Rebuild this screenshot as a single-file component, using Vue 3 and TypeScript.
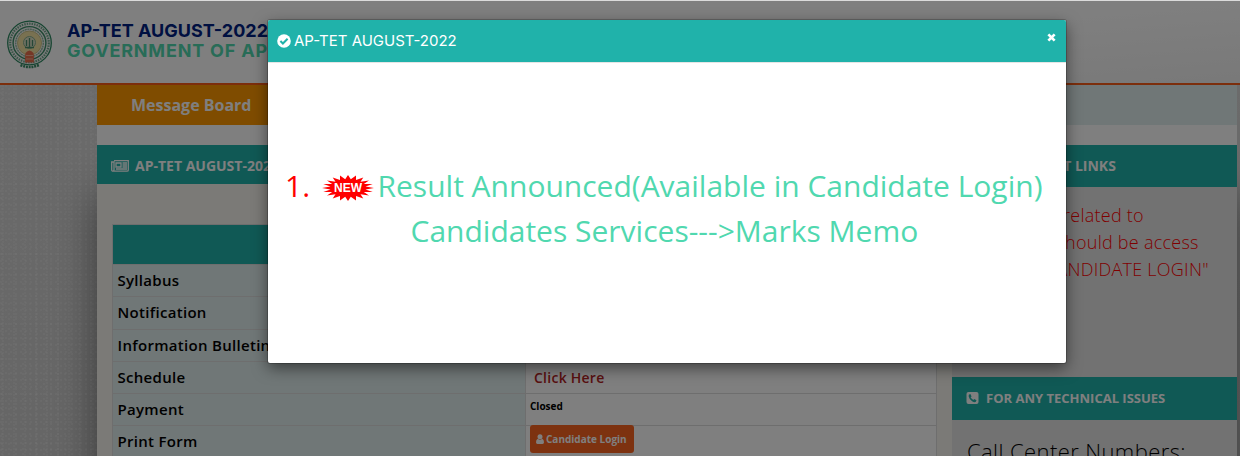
<script setup lang="ts">
interface Row {
  label: string
  kind: 'empty' | 'link' | 'closed' | 'button'
}

const rows: Row[] = [
  { label: 'Syllabus', kind: 'empty' },
  { label: 'Notification', kind: 'empty' },
  { label: 'Information Bulletin', kind: 'empty' },
  { label: 'Schedule', kind: 'link' },
  { label: 'Payment', kind: 'closed' },
  { label: 'Print Form', kind: 'button' },
]

// alternating radii give the spiky outline of the NEW badge
function burstPoints(): string {
  const points: string[] = []
  const spikes = 20
  for (let i = 0; i < spikes * 2; i++) {
    const angle = (Math.PI * i) / spikes
    const k = i % 2 === 0 ? 1 : 0.68
    points.push(`${(26 + 26 * k * Math.cos(angle)).toFixed(1)},${(13 + 13 * k * Math.sin(angle)).toFixed(1)}`)
  }
  return points.join(' ')
}
</script>

<template>
  <div class="screen">
    <div class="page">
      <header class="site-header">
        <svg class="emblem" viewBox="0 0 46 50">
          <circle cx="22.5" cy="23" r="21.8" fill="#f6f6f6" stroke="#2d8a62" stroke-width="1.300" />
          <circle cx="22.5" cy="23" r="19.300" fill="none" stroke="#6fa98d" stroke-width="2.200" stroke-dasharray="1.500 1" />
          <circle cx="22.5" cy="23" r="16.400" fill="none" stroke="#3f8f69" stroke-width="1.400" />
          <circle cx="22.5" cy="23" r="13.800" fill="none" stroke="#86b59a" stroke-width="1.300" stroke-dasharray="2 .6" />
          <circle cx="22.5" cy="23" r="12" fill="#f3e3a2" stroke="#cfc58a" />
          <circle cx="22.5" cy="22.500" r="6" fill="#dde0c4" stroke="#86ad8d" />
          <path d="M19.500 20v6m3-8v9m3-7v6M18 27.500h9" stroke="#4d8f6d" stroke-width="1.300" />
          <path d="M18.500 33q4-5 8 0l.4 3v6.500h-8.800v-6.500z" fill="#ea6f4c" />
          <path d="M19 35.500h7m-7 3.500h7" stroke="#fac0a6" stroke-width=".8" />
          <path d="M13.500 45q9 4 18.500 0" fill="none" stroke="#3c8d68" stroke-width="2.600" stroke-dasharray="2 .8" />
        </svg>
        <div class="site-title">
          <div class="title-main">AP-TET AUGUST-2022</div>
          <div class="title-sub">GOVERNMENT OF AP</div>
        </div>
      </header>

      <div class="container">
        <div class="message-bar">
          <div class="message-label">Message Board</div>
        </div>
        <div class="columns">
          <main class="main-col">
            <div class="panel-head main-head">
              <svg class="news-icon" viewBox="0 0 18 12">
                <path d="M3 .7h14.300v9.200q0 1.300-1.300 1.300H2q-1.300 0-1.300-1.300V2H3v7.700q0 1.300-1 1.300M5 3h5v4H5zM11.500 3H16M11.500 5H16M11.500 7H16M5 9h11" fill="none" stroke="currentColor" stroke-width="1.3" />
              </svg>
              <span>AP-TET AUGUST-2022</span>
            </div>
            <div class="table">
              <div class="table-head"></div>
              <div v-for="row in rows" :key="row.label" class="row">
                <div class="cell-label">{{ row.label }}</div>
                <div class="cell-value">
                  <span v-if="row.kind === 'link'" class="link">Click Here</span>
                  <span v-else-if="row.kind === 'closed'" class="closed">Closed</span>
                  <span v-else-if="row.kind === 'button'" class="login">
                    <svg class="user-icon" viewBox="0 0 8 10">
                      <circle cx="4" cy="2.700" r="2.500" />
                      <path d="M1.800 4.800Q4 6.500 6.200 4.800Q8 5.500 8 8.300Q8 10 6.500 10h-5Q0 10 0 8.300Q0 5.500 1.800 4.800z" />
                    </svg>
                    Candidate Login
                  </span>
                </div>
              </div>
            </div>
          </main>
          <aside class="side-col">
            <div class="panel-head links-head">IMPORTANT LINKS</div>
            <div class="links-body">
              <div>All services related to</div>
              <div>Candidate should be access</div>
              <div>through "CANDIDATE LOGIN"</div>
            </div>
            <div class="panel-head side-head">
              <svg class="phone-icon" viewBox="0 0 12 12">
                <rect width="12" height="12" rx="2" fill="currentColor" />
                <path d="M2.300 2.800L3.900 2l1.200 2.400-1 .8Q5 7 6.800 7.900l.9-1L10 8.200l-.7 1.600Q8 10.700 5.600 9.200 2.700 7.300 2.200 4.500z" fill="#20b2aa" />
              </svg>
              <span>FOR ANY TECHNICAL ISSUES</span>
            </div>
            <div class="call">Call Center Numbers:</div>
          </aside>
        </div>
      </div>
    </div>

    <div class="backdrop">
      <div class="modal">
        <div class="modal-head">
          <svg class="check-icon" viewBox="0 0 14 14">
            <circle cx="7" cy="7" r="6.800" fill="#fff" />
            <path d="M3.400 7l2.500 2.500 4.700-4.700" fill="none" stroke="#20b2aa" stroke-width="2" />
          </svg>
          <span class="modal-title">AP-TET AUGUST-2022</span>
          <svg class="close-icon" viewBox="0 0 8 8">
            <path d="M1.200 1.200l5.600 5.600M6.800 1.200L1.200 6.800" stroke="#fff" stroke-width="2.400" />
          </svg>
        </div>
        <div class="modal-body">
          <div class="line">
            <span class="number">1.</span>
            <svg class="new-badge" viewBox="0 0 52 26">
              <polygon :points="burstPoints()" fill="#f00" />
              <text x="26" y="17.300" text-anchor="middle">NEW</text>
            </svg>
            <span class="result">Result Announced(Available in Candidate Login)</span>
          </div>
          <div class="line second">
            <span class="services">Candidates Services---&gt;Marks Memo</span>
          </div>
        </div>
      </div>
    </div>
  </div>
</template>

<style>
body {
  margin: 0;
  overflow: hidden;
}
</style>

<style scoped>
.screen {
  position: relative;
  width: 1240px;
  height: 456px;
  overflow: hidden;
  font-family: "Open Sans", sans-serif;
}

.page {
  height: 456px;
  box-sizing: border-box;
  border-top: 1px solid #dbdbdb;
  overflow: hidden;
  background-color: #d4d4d4;
  background-image: radial-gradient(circle at 1px 1px, rgba(255, 255, 255, 0.16) 0.7px, transparent 1px),
    radial-gradient(circle at 2px 3px, rgba(255, 255, 255, 0.16) 0.7px, transparent 1px),
    radial-gradient(circle at 3px 1px, rgba(255, 255, 255, 0.14) 0.7px, transparent 1px),
    linear-gradient(rgba(255, 255, 255, 0.1), rgba(0, 0, 0, 0.04));
  background-size: 5px 7px, 7px 5px, 11px 3px, auto;
}

.site-header {
  display: flex;
  height: 84px;
  box-sizing: border-box;
  padding: 19px 0 0 7px;
  border-bottom: 2px solid #f85c18;
  background: linear-gradient(175deg, #fff 55%, #f2f2f2);
}

.emblem {
  width: 46px;
  height: 50px;
}

.site-title {
  margin: 1px 0 0 14px;
  font-family: Inter, sans-serif;
  font-weight: 700;
  font-size: 18px;
  line-height: 20px;
  white-space: nowrap;
}

.title-main {
  color: #002182;
}

.title-sub {
  color: #50d8af;
  letter-spacing: 0.8px;
}

.container {
  width: 1140px;
  margin-left: 97px;
  background: #fff;
  box-shadow: 0 110px 40px rgba(0, 0, 0, 0.45);
}

.message-bar {
  height: 40px;
  background: #e0eeee;
}

.message-label {
  width: 189px;
  height: 40px;
  box-sizing: border-box;
  padding-left: 34px;
  background: #ff9900;
  color: #fff;
  font-weight: 700;
  font-size: 16px;
  line-height: 40px;
}

.columns {
  display: flex;
  padding-top: 20px;
}

.main-col {
  width: 855px;
  height: 320px;
  background: #f6f4ee;
}

.panel-head {
  display: flex;
  align-items: center;
  height: 39px;
  padding-left: 14px;
  box-sizing: border-box;
  background: #20b2aa;
  color: #fff;
  font-size: 13px;
  font-weight: 700;
  white-space: nowrap;
}

.main-head {
  padding-top: 2px;
  font-size: 14px;
}

.news-icon {
  width: 18px;
  height: 12px;
  margin-right: 6px;
}

.table {
  width: 825px;
  box-sizing: border-box;
  margin: 40px 0 0 15px;
  border: 1px solid #ddd;
}

.table-head {
  height: 39px;
  background: #20b2aa;
}

.row {
  display: flex;
  height: 32.3px;
  box-sizing: border-box;
  border-top: 1px solid #ddd;
}

.cell-label {
  width: 412px;
  box-sizing: border-box;
  padding-left: 4.5px;
  background: #e0eeee;
  color: #000;
  font-size: 15px;
  font-weight: 600;
  line-height: 30px;
  letter-spacing: 0.3px;
  white-space: nowrap;
}

.cell-value {
  display: flex;
  flex: 1;
  align-items: center;
  padding-left: 4px;
  border-left: 1px solid #ddd;
  background: #fff;
}

.link {
  padding: 0 0 1px 4px;
  color: #b22222;
  font-size: 14px;
  font-weight: 600;
  letter-spacing: 0.25px;
}

.closed {
  padding-bottom: 7px;
  color: #000;
  font-size: 10px;
  font-weight: 700;
}

.login {
  display: flex;
  align-items: center;
  height: 28px;
  margin-top: -6px;
  padding: 0 7px 0 6px;
  border-radius: 3px;
  background: #fb6420;
  color: #fff;
  font-size: 10px;
  font-weight: 700;
  white-space: nowrap;
}

.user-icon {
  width: 8px;
  height: 10px;
  margin-right: 2px;
  fill: currentColor;
}

.side-col {
  width: 285px;
  height: 320px;
  background: #e5e5e5;
}

.side-head {
  height: 43px;
  padding-bottom: 1px;
}

.links-head {
  height: 42px;
  padding: 0 0 1px 35px;
  font-size: 14px;
}

.links-body {
  height: 190px;
  box-sizing: border-box;
  padding: 15px 0 0 15px;
  color: #f00;
  font-size: 18px;
  font-weight: 300;
  line-height: 27px;
  letter-spacing: 0.25px;
  white-space: nowrap;
}

.phone-icon {
  width: 13px;
  height: 12px;
  margin-right: 7px;
}

.call {
  padding: 15px 0 0 15px;
  color: #000;
  font-size: 22px;
  font-weight: 300;
  line-height: 32px;
  letter-spacing: 0.4px;
  white-space: nowrap;
}

.backdrop {
  position: absolute;
  top: 1px;
  left: 0;
  right: 0;
  bottom: 0;
  background: rgba(0, 0, 0, 0.5);
}

.modal {
  width: 798px;
  height: 343px;
  margin: 19px 0 0 268px;
  border-radius: 2px;
  background: #fff;
  box-shadow: 0 0 0 1px rgba(0, 0, 0, 0.2), 0 5px 15px rgba(0, 0, 0, 0.5);
}

.modal-head {
  display: flex;
  align-items: center;
  height: 43px;
  padding: 0 10px 0 9px;
  border-bottom: 1px solid #e5e5e5;
  border-radius: 2px 2px 0 0;
  box-sizing: border-box;
  background: #20b2aa;
}

.check-icon {
  width: 14px;
  height: 14px;
}

.modal-title {
  flex: 1;
  margin: -1px 0 0 3px;
  color: #fff;
  font-family: Inter, sans-serif;
  font-size: 15px;
}

.close-icon {
  width: 9px;
  height: 9px;
  margin-top: -7px;
}

.modal-body {
  padding-top: 100px;
  font-size: 30px;
  line-height: 45px;
}

.line {
  display: flex;
  align-items: center;
  height: 45px;
  padding-left: 17px;
  color: #50d8af;
  white-space: nowrap;
}

.number {
  width: 36.5px;
  color: #f00;
}

.new-badge {
  width: 52px;
  height: 26px;
  margin: 5px 4px 0 0;
}

.new-badge text {
  fill: #fff;
  font: bold 12px "Liberation Sans", sans-serif;
}

.second {
  padding-left: 142.5px;
}
</style>
